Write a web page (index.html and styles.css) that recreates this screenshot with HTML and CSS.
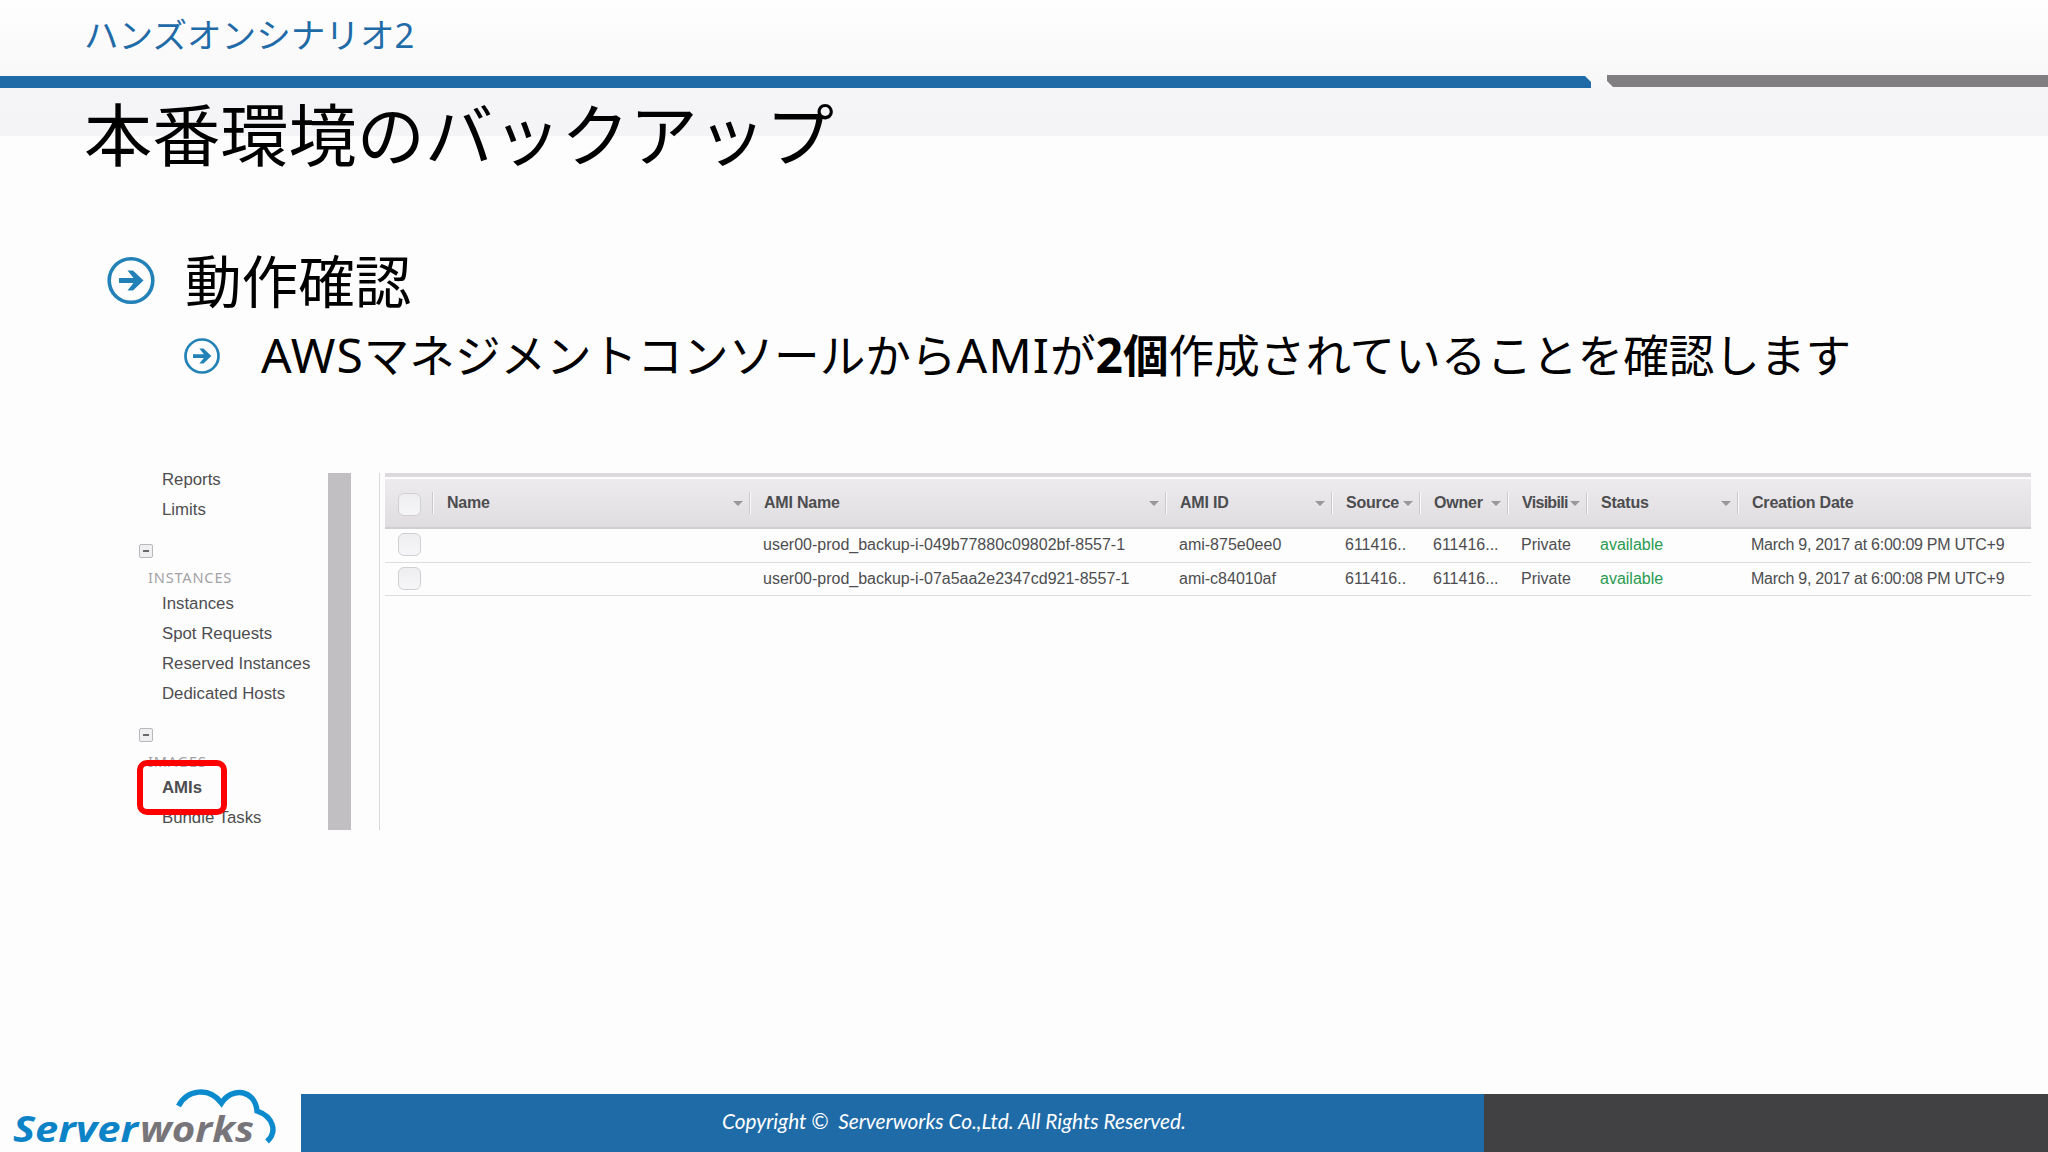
FILE: index.html
```html
<!DOCTYPE html>
<html lang="ja">
<head>
  <meta charset="UTF-8">
  <meta name="viewport" content="width=device-width, initial-scale=1.0">
  <title>本番環境のバックアップ</title>
  <link rel="stylesheet" href="styles.css">
</head>
<body>
  <div class="slide">
    <header class="header">
      <div class="scenario">ハンズオンシナリオ<span class="latin">2</span></div>
      <div class="bars">
        <div class="bar-blue"></div>
        <div class="bar-gray"></div>
      </div>
      <h1>本番環境のバックアップ</h1>
    </header>

    <main class="content">
      <div class="bullet">
        <svg class="arrow" viewBox="0 0 48 48">
          <circle cx="24" cy="24" r="21.8" />
          <path d="M12 21.500h14.500L20.500 14h5.500l10.500 10-10.500 10h-5.500l6-7.500H12z" />
        </svg>
        <h2>動作確認</h2>
      </div>
      <div class="bullet sub">
        <svg class="arrow" viewBox="0 0 48 48">
          <circle cx="24" cy="24" r="22" />
          <path d="M12 21.500h14.500L20.500 14h5.500l10.500 10-10.500 10h-5.500l6-7.500H12z" />
        </svg>
        <p><span class="latin">AWS</span>マネジメントコンソールから<span class="latin">AMI</span>が<b><span class="latin">2</span>個</b>作成されていることを確認します</p>
      </div>

      <div class="console">
        <nav class="sidebar">
          <ul>
            <li>Reports</li>
            <li>Limits</li>
          </ul>
          <div class="toggle"></div>
          <h3>INSTANCES</h3>
          <ul>
            <li>Instances</li>
            <li>Spot Requests</li>
            <li>Reserved Instances</li>
            <li>Dedicated Hosts</li>
          </ul>
          <div class="toggle"></div>
          <h3>IMAGES</h3>
          <ul>
            <li class="active">AMIs</li>
            <li>Bundle Tasks</li>
          </ul>
          <div class="highlight"></div>
        </nav>
        <div class="scrollbar"></div>
        <div class="panel">
          <div class="table">
            <div class="row head">
              <div class="check"><i></i></div>
              <div class="sort">Name</div>
              <div class="sort">AMI Name</div>
              <div class="sort">AMI ID</div>
              <div class="sort">Source</div>
              <div class="sort">Owner</div>
              <div class="sort tight">Visibili</div>
              <div class="sort">Status</div>
              <div>Creation Date</div>
            </div>
            <div class="row">
              <div class="check"><i></i></div>
              <div></div>
              <div>user00-prod_backup-i-049b77880c09802bf-8557-1</div>
              <div>ami-875e0ee0</div>
              <div>611416..</div>
              <div>611416...</div>
              <div>Private</div>
              <div class="available">available</div>
              <div class="date">March 9, 2017 at 6:00:09 PM UTC+9</div>
            </div>
            <div class="row">
              <div class="check"><i></i></div>
              <div></div>
              <div>user00-prod_backup-i-07a5aa2e2347cd921-8557-1</div>
              <div>ami-c84010af</div>
              <div>611416..</div>
              <div>611416...</div>
              <div>Private</div>
              <div class="available">available</div>
              <div class="date">March 9, 2017 at 6:00:08 PM UTC+9</div>
            </div>
          </div>
        </div>
      </div>
    </main>

    <footer class="footer">
      <svg class="logo" viewBox="0 0 301 72">
        <path class="cloud" d="M178.500 26C187 9.500 209 6.500 221.500 23C232 6.500 255 9.500 257 31C273 36.500 278 51.500 267 61.500" />
        <text class="logo-blue" x="13" y="62" textLength="125" lengthAdjust="spacingAndGlyphs">Server</text>
        <text class="logo-gray" x="140" y="62" textLength="114" lengthAdjust="spacingAndGlyphs">works</text>
      </svg>
      <div class="copyright">Copyright ©&nbsp; Serverworks Co.,Ltd. All Rights Reserved.</div>
      <div class="footer-end"></div>
    </footer>
  </div>
</body>
</html>
```
FILE: styles.css
```css
* {
  box-sizing: border-box;
}

body {
  margin: 0;
  background: #fdfdfd;
  color: #000;
  font-family: "Noto Sans CJK JP", sans-serif;
}

h1, h2, h3, p, ul {
  margin: 0;
  padding: 0;
  font-weight: normal;
}

.slide {
  width: 2048px;
  height: 1152px;
  display: flex;
  flex-direction: column;
  overflow: hidden;
}

.latin {
  font-family: "Noto Sans", sans-serif;
}

/* header */
.header {
  height: 136px;
  background: linear-gradient(#fefefe, #f9f8f9 75px, #f5f4f7 90px, #f4f3f6);
}

.scenario {
  height: 75px;
  padding-left: 84px;
  font-size: 34.6px;
  line-height: 66px;
  color: #1f6ba8;
  white-space: nowrap;
}

.bars {
  height: 13px;
  display: flex;
  gap: 16px;
}

.bar-blue {
  width: 1591px;
  height: 12px;
  margin-top: 1px;
  background: #1f6ba8;
  clip-path: polygon(0 0, calc(100% - 6px) 0, 100% 6px, 100% 100%, 0 100%);
}

.bar-gray {
  flex: 1;
  height: 12px;
  background: #807e80;
  clip-path: polygon(0 0, 100% 0, 100% 100%, 6px 100%, 0 6px);
}

h1 {
  padding-left: 84px;
  font-size: 68.2px;
  line-height: 87px;
  white-space: nowrap;
}

/* bullets */
.content {
  flex: 1;
  padding-top: 109px;
}

.bullet {
  height: 70px;
  padding-left: 107px;
  display: flex;
  align-items: center;
}

.arrow {
  width: 48px;
  height: 49px;
  margin-right: 30px;
  flex: none;
}

.arrow circle {
  fill: none;
  stroke: #2281b6;
  stroke-width: 3.6;
}

.arrow path {
  fill: #2281b6;
}

h2 {
  margin-top: -4px;
  font-size: 56.6px;
  line-height: 70px;
}

.sub {
  height: 80px;
  margin-top: 1px;
  padding-left: 184px;
}

.sub .arrow {
  width: 36px;
  height: 36px;
  margin-right: 41px;
}

.sub p {
  margin-top: -4px;
  font-size: 45.6px;
  line-height: 80px;
  white-space: nowrap;
}

.sub .latin {
  font-size: 48px;
  letter-spacing: 1px;
}

.sub b .latin {
  letter-spacing: 0;
}

/* console */
.console {
  height: 357px;
  margin: 77px 17px 0 0;
  display: flex;
  overflow: hidden;
  font-family: "Liberation Sans", Arial, sans-serif;
  color: #4d4d50;
}

.sidebar {
  position: relative;
  width: 328px;
  font-size: 16.8px;
  line-height: 26px;
}

.sidebar ul {
  padding-left: 162px;
  margin-top: 2px;
  list-style: none;
}

.sidebar ul:first-child {
  margin-top: -6px;
}

.sidebar li {
  height: 30.3px;
}

.active {
  font-weight: bold;
}

.toggle {
  width: 14px;
  height: 14px;
  margin: 16px 0 7px 139px;
  padding: 5px 2px;
  border: 1px solid #b9b8bb;
  border-radius: 2px;
  background: #efeef0;
}

.toggle::before {
  content: "";
  display: block;
  height: 2px;
  margin: 0 1px;
  background: #69686b;
}

h3 {
  padding-left: 148px;
  font-family: "Noto Sans", sans-serif;
  font-size: 14.6px;
  line-height: 24px;
  letter-spacing: 0.8px;
  color: #a3a2a5;
}

.highlight {
  position: absolute;
  left: 137px;
  top: 287px;
  width: 90px;
  height: 55px;
  border: 6px solid #fe0000;
  border-radius: 10px;
}

.scrollbar {
  width: 23px;
  background: #c1bfc2;
}

.panel {
  flex: 1;
  margin-left: 28px;
  padding-left: 5px;
  border-left: 1px solid #dad9dc;
}

.table {
  border-top: 4px solid #dcdadd;
}

.row {
  height: 33px;
  display: grid;
  grid-template-columns: 47px 317px 416px 166px 88px 88px 79px 151px 1fr;
  border-bottom: 1px solid #dddce0;
  font-size: 16px;
  line-height: 32px;
  white-space: nowrap;
}

.row > div {
  padding-left: 14px;
}

.row > .check {
  padding-left: 13px;
}

.head {
  height: 50px;
  margin-top: 2px;
  padding-top: 13px;
  background: linear-gradient(#edebee, #dfdde0);
  border-bottom: 2px solid #cfced1;
  font-weight: bold;
  line-height: 22px;
  letter-spacing: -0.2px;
}

.head + .row {
  height: 34px;
}

.head > div {
  position: relative;
  height: 22px;
}

.head > div + div {
  border-left: 1px solid #c9c8cb;
  box-shadow: inset 1px 0 #fafafa;
}

.sort::after {
  content: "";
  position: absolute;
  right: 6px;
  top: 9px;
  border: 5px solid transparent;
  border-top-color: #98979a;
  border-bottom: 0;
}

.tight {
  letter-spacing: -0.7px;
}

.check i {
  display: block;
  width: 23px;
  height: 23px;
  margin-top: 4px;
  border: 1px solid #d0cfd2;
  border-radius: 6px;
  background: linear-gradient(#eeedf0, #f6f5f7);
}

.head .check i {
  margin-top: 1px;
}

.date {
  letter-spacing: -0.26px;
}

.available {
  color: #2a9a50;
}

/* footer */
.footer {
  height: 72px;
  display: flex;
  align-items: flex-end;
}

.logo {
  width: 301px;
  height: 72px;
}

.cloud {
  fill: none;
  stroke: #0b8bcd;
  stroke-width: 5.4;
}

.logo text {
  font: italic bold 35px "Open Sans", sans-serif;
}

.logo-blue {
  fill: #0b83c6;
}

.logo-gray {
  fill: #77757a;
}

.copyright {
  width: 1183px;
  height: 58px;
  padding-left: 421px;
  background: #1f6ba8;
  color: #fff;
  font: italic 20.8px/54px Lato, sans-serif;
  white-space: nowrap;
}

.footer-end {
  flex: 1;
  height: 58px;
  background: #414042;
}
```
